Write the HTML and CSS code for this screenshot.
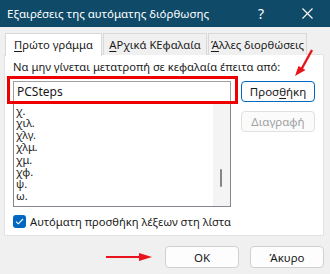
FILE: index.html
```html
<!DOCTYPE html>
<html lang="el">
<head>
    <meta charset="UTF-8">
    <title>Εξαιρέσεις της αυτόματης διόρθωσης</title>
    <link rel="stylesheet" href="styles.css">
</head>
<body>
    <div class="titlebar">
        <span class="title">Εξαιρέσεις της αυτόματης διόρθωσης</span>
        <span class="tb-btn">?</span>
        <span class="tb-btn close">
            <svg width="11" height="11" viewBox="0 0 11 11"><path d="M0.5 0.5L10.5 10.5M10.5 0.5L0.5 10.5" stroke="#fff" stroke-width="1.1" fill="none"/></svg>
        </span>
    </div>

    <div class="content">
        <div class="tabs">
            <div class="tab active t1"><u>Π</u>ρώτο γράμμα</div>
            <div class="tab t2"><u>Α</u>Ρχικά ΚΕφαλαία</div>
            <div class="tab t3"><u>Ά</u>λλες διορθώσεις</div>
        </div>

        <div class="panel">
            <div class="label">Να μην γίνεται μετατροπή σε κεφαλαία έπειτα από:</div>
            <div class="row">
                <div class="lists">
                    <div class="entry">PCSteps</div>
                    <div class="list">
                        <ul class="items">
                            <li>χ.</li>
                            <li>χιλ.</li>
                            <li>χλγ.</li>
                            <li>χλμ.</li>
                            <li>χμ.</li>
                            <li>χφ.</li>
                            <li>ψ.</li>
                            <li>ω.</li>
                        </ul>
                        <div class="scrollbar"><div class="thumb"></div></div>
                    </div>
                </div>
                <div class="side">
                    <button class="btn primary">Προσ<u>θ</u>ήκη</button>
                    <button class="btn" disabled>Διαγραφή</button>
                </div>
            </div>
            <div class="check">
                <span class="box">
                    <svg width="9" height="7" viewBox="0 0 9 7"><path d="M1 3.6L3.3 5.8L8 1" stroke="#fff" stroke-width="1.1" fill="none"/></svg>
                </span>
                <span>Αυτόματη προσθήκη λέξεων στη λίστα</span>
            </div>

            <div class="mark"></div>
            <svg class="arrow-down" width="22" height="30" viewBox="0 0 22 30">
                <path d="M19 1L8 21" stroke="#e8141b" stroke-width="2.4" fill="none"/>
                <path d="M2 27L5.5 17L12.5 21Z" fill="#e8141b"/>
            </svg>
        </div>

        <div class="footer">
            <svg class="arrow-right" width="48" height="8" viewBox="0 0 48 8">
                <path d="M0 4H36" stroke="#e8141b" stroke-width="2.2"/>
                <path d="M46 4L33 0V8Z" fill="#e8141b"/>
            </svg>
            <button class="btn default">OK</button>
            <button class="btn">Άκυρο</button>
        </div>
    </div>
</body>
</html>
```

FILE: styles.css
```css
body {
    margin: 0;
    width: 330px;
    height: 274px;
    overflow: hidden;
    background-color: #f0f0f0;
    font-family: 'Noto Sans', sans-serif;
    font-size: 11.2px;
    color: #1a1a1a;
}

.titlebar {
    display: flex;
    align-items: center;
    height: 27px;
    background-color: #0f4a68;
    color: #fff;
}

.title {
    flex: 1;
    padding-left: 7px;
    font-size: 11.5px;
}

.tb-btn {
    width: 46px;
    text-align: center;
    font-size: 14px;
    display: flex;
    justify-content: center;
}

.content {
    padding: 6px 6px 0 4px;
}

.tabs {
    display: flex;
    height: 22px;
    padding-left: 1px;
    position: relative;
    z-index: 1;
}

.tab {
    box-sizing: border-box;
    height: 22px;
    border: 1px solid #d9d9d9;
    border-bottom: none;
    background-color: #f0f0f0;
    text-align: center;
    line-height: 21px;
    margin-right: 1px;
    white-space: nowrap;
}

.tab u {
    text-underline-offset: 2px;
}

.tab.active {
    background-color: #fff;
    height: 23px;
}

.t1 { width: 97px; }
.t2 { width: 104px; }
.t3 { width: 99px; }

.panel {
    position: relative;
    box-sizing: border-box;
    height: 182px;
    margin-top: -1px;
    background-color: #fff;
    border: 1px solid #e3e3e3;
    padding: 4px 8px 0 8px;
}

.label {
    line-height: 15px;
    margin-bottom: 7px;
    white-space: nowrap;
}

.row {
    display: flex;
    gap: 10px;
}

.lists {
    width: 219px;
}

.entry {
    box-sizing: border-box;
    height: 22px;
    border: 1px solid #a0a0a0;
    padding: 0 3px;
    line-height: 20px;
    font-size: 12px;
}

.list {
    box-sizing: border-box;
    height: 104px;
    border: 1px solid #828790;
    border-top: none;
    display: flex;
}

.items {
    flex: 1;
    list-style: none;
    margin: 0;
    padding: 2px 0 0 2px;
    line-height: 12.15px;
    font-size: 11px;
}

.scrollbar {
    width: 17px;
    background-color: #f4f4f4;
    position: relative;
}

.thumb {
    position: absolute;
    left: 7px;
    top: 66px;
    width: 2px;
    height: 18px;
    border-radius: 1px;
    background-color: #858585;
}

.side {
    display: flex;
    flex-direction: column;
    gap: 9px;
}

.btn {
    box-sizing: border-box;
    width: 74px;
    height: 21px;
    padding: 0;
    border: 1px solid #d0d0d0;
    border-radius: 4px;
    background-color: #fdfdfd;
    font-family: inherit;
    font-size: 11.5px;
    color: #1a1a1a;
}

.btn.primary {
    border-color: #0067c0;
}

.btn u {
    text-underline-offset: 2px;
}

.btn:disabled {
    color: #a0a0a0;
    border-color: #e0e0e0;
    background-color: #fbfbfb;
}

.check {
    display: flex;
    align-items: center;
    gap: 4px;
    margin-top: 7px;
}

.box {
    width: 13px;
    height: 13px;
    border-radius: 3px;
    background-color: #0067c0;
    display: flex;
    align-items: center;
    justify-content: center;
}

.mark {
    position: absolute;
    left: 2px;
    top: 21px;
    width: 225px;
    height: 22px;
    border: 3px solid #ee0000;
}

.arrow-down {
    position: absolute;
    left: 288px;
    top: -6px;
}

.footer {
    display: flex;
    justify-content: flex-end;
    align-items: center;
    gap: 11px;
    margin-top: 10px;
}

.footer .btn {
    height: 22px;
}
```
